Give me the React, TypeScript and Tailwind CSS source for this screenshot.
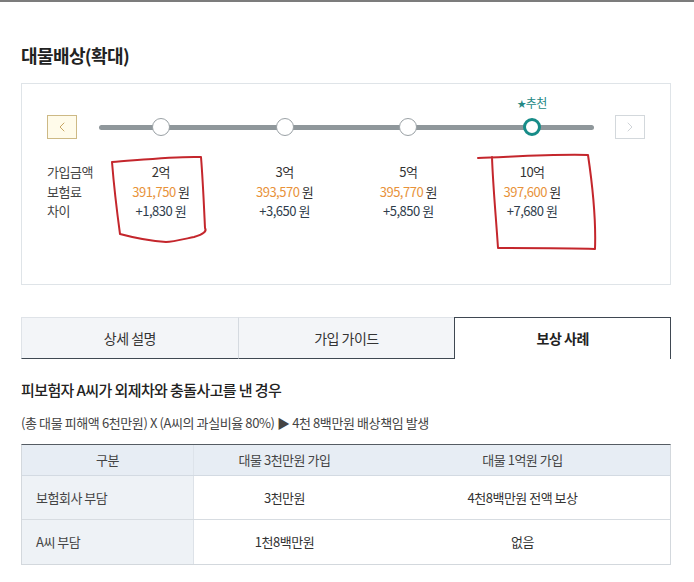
import { ChevronLeft, ChevronRight } from 'lucide-react';

const options = [
  { amount: '2억', premium: '391,750', diff: '+1,830' },
  { amount: '3억', premium: '393,570', diff: '+3,650' },
  { amount: '5억', premium: '395,770', diff: '+5,850' },
  { amount: '10억', premium: '397,600', diff: '+7,680' },
];

const selected = 3;

const tabs = ['상세 설명', '가입 가이드', '보상 사례'];
const activeTab = 2;

const rows = [
  { label: '보험회사 부담', a: '3천만원', b: '4천8백만원 전액 보상' },
  { label: 'A씨 부담', a: '1천8백만원', b: '없음' },
];

export default function App() {
  return (
    <div className="relative min-h-screen w-full bg-white border-t-2 border-[#7c7c7c] font-['Noto_Sans_CJK_KR','Noto_Sans',sans-serif] text-[#333]">
      <div className="ml-[21px] w-[650px] pt-[39px]">
        {/* 제목 */}
        <h2 className="text-[18px] leading-[28px] font-bold tracking-[-0.6px] text-[#222]">대물배상(확대)</h2>

        {/* 가입금액 선택 박스 */}
        <div className="mt-[14px] h-[202px] border border-[#dfe4e8] pl-[25px] pr-[24px] pt-[31px]">
          <div className="flex items-center h-[24px]">
            <div className="w-[52px]">
              <button className="flex items-center justify-center w-[30px] h-[24px] border border-[#cdb985] bg-[#fffbea] text-[#c7a564]">
                <ChevronLeft size={16} strokeWidth={1.5} />
              </button>
            </div>
            <div className="relative w-[495px] h-[24px]">
              <div className="absolute left-0 right-0 top-[9.5px] h-[5px] rounded-full bg-[#8f979b]" />
              <div className="relative grid grid-cols-4 h-full">
                {options.map((o, i) => (
                  <div key={o.amount} className="relative flex items-center justify-center">
                    {i === selected ? (
                      <>
                        <span className="absolute bottom-[27px] whitespace-nowrap text-[12px] leading-[16px] text-[#238884] tracking-[-0.5px]">
                          <span className="text-[9px] align-[1px]">★</span>추천
                        </span>
                        <span className="w-[18px] h-[18px] rounded-full border-[3px] border-[#178c88] bg-white" />
                      </>
                    ) : (
                      <span className="w-[18px] h-[18px] rounded-full border border-[#9aa1a5] bg-white" />
                    )}
                  </div>
                ))}
              </div>
            </div>
            <div className="flex-1 flex pl-[21px]">
              <button className="flex items-center justify-center w-[30px] h-[24px] border border-[#d3d8dc] bg-white text-[#c4c9ce]">
                <ChevronRight size={16} strokeWidth={1.2} />
              </button>
            </div>
          </div>

          <div className="flex mt-[23px] text-[13px] leading-[19.5px] tracking-[-0.5px]">
            <div className="w-[52px] text-[#444]">
              <div>가입금액</div>
              <div>보험료</div>
              <div>차이</div>
            </div>
            <div className="w-[495px] grid grid-cols-4 text-center">
              {options.map((o) => (
                <div key={o.amount}>
                  <div className="text-[#333]">{o.amount}</div>
                  <div>
                    <span className="text-[#e8923a]">{o.premium}</span> <span className="text-[#333]">원</span>
                  </div>
                  <div className="text-[#2f3d4c]">{o.diff} 원</div>
                </div>
              ))}
            </div>
          </div>
        </div>

        {/* 탭 */}
        <div className="mt-[32px] grid grid-cols-3 h-[42px]">
          {tabs.map((t, i) =>
            i === activeTab ? (
              <div
                key={t}
                className="flex items-center justify-center bg-white border-t border-x border-[#3f4852] text-[14px] font-bold text-[#222] tracking-[-0.5px]"
              >
                {t}
              </div>
            ) : (
              <div
                key={t}
                className={`flex items-center justify-center bg-[#f3f5f8] border-t border-[#dfe3e8] border-b border-b-[#3f4852] text-[14px] text-[#333] tracking-[-0.5px] ${
                  i === 0 ? 'border-l border-l-[#dfe3e8]' : 'border-l border-l-[#d5dae0]'
                }`}
              >
                {t}
              </div>
            )
          )}
        </div>

        {/* 보상 사례 */}
        <p className="mt-[20px] text-[15px] leading-[22px] font-medium text-[#222] tracking-[-0.6px]">
          피보험자 A씨가 외제차와 충돌사고를 낸 경우
        </p>
        <p className="mt-[12px] text-[13px] leading-[20px] text-[#444] tracking-[-0.4px]">
          (총 대물 피해액 6천만원) X (A씨의 과실비율 80%) ▶ 4천 8백만원 배상책임 발생
        </p>

        <div className="mt-[11px] border-t border-[#555c63] border-x border-x-[#d3d8dd] border-b border-b-[#d3d8dd] text-[13px] tracking-[-0.5px]">
          <div className="grid grid-cols-[172px_181px_1fr] h-[31px] bg-[#e7edf4] border-b border-[#d3dae2] text-[#444]">
            <div className="flex items-center justify-center border-r border-[#dde3ea]">구분</div>
            <div className="flex items-center justify-center">대물 3천만원 가입</div>
            <div className="flex items-center justify-center">대물 1억원 가입</div>
          </div>
          {rows.map((r, i) => (
            <div
              key={r.label}
              className={`grid grid-cols-[172px_181px_1fr] h-[44px] text-[#333] ${i === 0 ? 'border-b border-[#d7dce1]' : ''}`}
            >
              <div className="flex items-center pl-[14px] bg-[#eef2f6] border-r border-[#dde2e8] text-[#444]">{r.label}</div>
              <div className="flex items-center justify-center">{r.a}</div>
              <div className="flex items-center justify-center">{r.b}</div>
            </div>
          ))}
        </div>
      </div>

      {/* 손으로 그린 빨간 표시 */}
      <svg className="absolute left-0 top-0 pointer-events-none" width="694" height="582" fill="none" stroke="#c4262c" strokeWidth="2" strokeLinecap="round" strokeLinejoin="round">
        <path d="M112 160 C140 158 175 154 201 155 C203 180 204 205 205 226 C207 229 204 232 194 235 C180 238 172 240 166 240 C150 239 135 236 120 232 C117 210 114 185 112 160" />
        <path d="M478 156 C510 155 550 152 588 153 C592 180 596 220 595 247 C570 246 530 246 498 246 C496 215 493 185 492 155" />
      </svg>
    </div>
  );
}
